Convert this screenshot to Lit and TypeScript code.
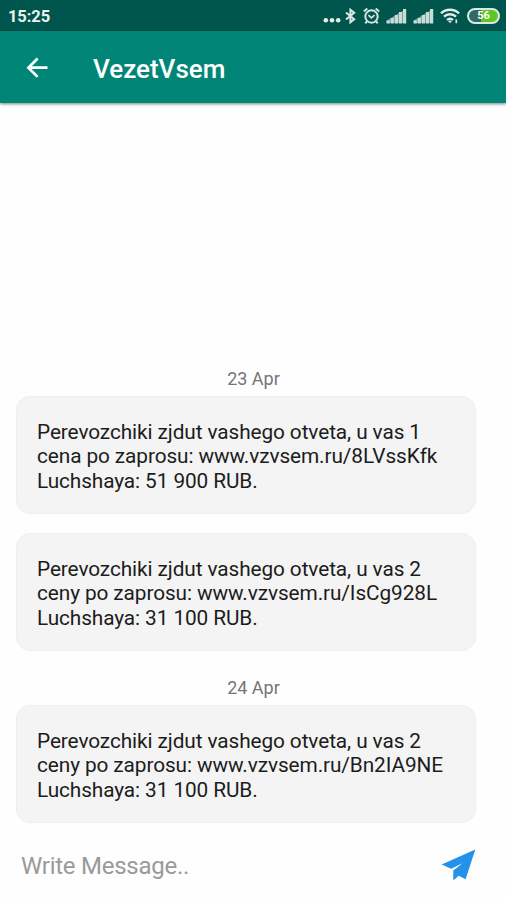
import { LitElement, html, css, svg } from "lit";
import { customElement, property } from "lit/decorators.js";

const FONT = css`Roboto, "Noto Sans", sans-serif`;

@customElement("status-bar")
class StatusBar extends LitElement {
  static styles = css`
    :host {
      display: flex;
      align-items: center;
      justify-content: space-between;
      box-sizing: border-box;
      height: 31px;
      padding: 2px 6px 0 8px;
      background: #00564c;
      font-family: ${FONT};
      color: #e9f3f1;
    }
    .time { font-size: 16.5px; font-weight: 700; letter-spacing: -0.1px; line-height: 20px; padding-top: 1px; }
    .icons { display: flex; align-items: center; padding-bottom: 1px; }
    svg { display: block; }
    .dots { margin-right: 4px; }
    .bt { margin-right: 7px; }
    .alarm { margin-right: 6px; }
    .signal { margin-right: 6px; }
    .wifi { margin-right: 7px; }
    .battery {
      display: flex;
      align-items: center;
      justify-content: center;
      box-sizing: border-box;
      width: 33px;
      height: 16px;
      border: 2px solid #d9eae6;
      border-radius: 8px;
      background: linear-gradient(90deg, #2e6b62 0 42%, #5fc628 42%);
      color: #fff;
      font-size: 11px;
      font-weight: 700;
      line-height: 12px;
    }
  `;

  private signal() {
    const heights = [3, 5.5, 8.5, 11.5, 14.5];
    return html`<svg class="signal" width="21" height="16" viewBox="0 0 21 16">
      <path d="M.6 15V12.500L20 1V15z" fill="#6f9f97"/>
      ${heights.map((h, i) => svg`<rect x=${0.6 + i * 4.1} y=${15.5 - h} width="3.2" height=${h} fill="#c8ddd9"/>`)}
    </svg>`;
  }

  render() {
    return html`
      <div class="time">15:25</div>
      <div class="icons">
        <svg class="dots" width="18" height="16" viewBox="0 0 18 16" fill="#e3efed">
          <circle cx="2.800" cy="12.300" r="2.300"/><circle cx="9" cy="12.300" r="2.300"/><circle cx="15.200" cy="12.300" r="2.300"/>
        </svg>
        <svg class="bt" width="11" height="16" viewBox="0 0 11 16" fill="none" stroke="#d9e8e5" stroke-width="2">
          <path d="M1 4.500 9.200 11.300 5.400 14.300V1.700L9.200 4.700 1 11.500"/>
        </svg>
        <svg class="alarm" width="17" height="18" viewBox="0 0 17 18" fill="none" stroke="#d3e4e1" stroke-width="2">
          <circle cx="8.500" cy="9.500" r="6.200"/>
          <path d="M.8 4.400 4.300 1.400M16.200 4.400 12.700 1.400M3.900 14.300 2.300 16.400M13.100 14.300 14.700 16.400"/>
          <path d="m5.400 8.200 3 2.700 3.200-2.800" stroke-width="1.700"/>
        </svg>
        ${this.signal()}${this.signal()}
        <svg class="wifi" width="20" height="16" viewBox="0 0 20 16" fill="none" stroke="#e3efed" stroke-width="2.400">
          <path d="M1 5.300C6 .5 14 .5 19 5.300M4 8.700c3.400-3.200 8.600-3.200 12 0M7 11.900c1.800-1.500 4.200-1.500 6 0"/>
          <path d="M8 12.800 10 15.300l2-2.500z" fill="#e3efed" stroke="none"/>
          <path d="M16.300 11.400v3.800" stroke-width="1.600"/>
        </svg>
        <div class="battery">56</div>
      </div>
    `;
  }
}

@customElement("app-header")
class AppHeader extends LitElement {
  @property() heading = "";
  static styles = css`
    :host {
      display: flex;
      align-items: center;
      box-sizing: border-box;
      height: 72px;
      padding: 1px 26px 0;
      background: #008577;
      color: #fff;
      box-shadow: 0 1px 3px rgba(0, 0, 0, 0.5);
      font-family: ${FONT};
    }
    svg { display: block; margin-right: 45px; }
    .title { font-size: 26px; font-weight: 500; line-height: 32px; padding-top: 3px; }
  `;
  render() {
    return html`
      <svg width="22" height="22" viewBox="0 0 22 22" fill="none" stroke="#fff" stroke-width="2.700">
        <path d="M21.500 10.700H2.500M11.600 1.500 2.400 10.700l9.200 9.200"/>
      </svg>
      <div class="title">${this.heading}</div>
    `;
  }
}

@customElement("message-bubble")
class MessageBubble extends LitElement {
  @property({ attribute: false }) lines: string[] = [];
  static styles = css`
    :host {
      display: block;
      box-sizing: border-box;
      width: 460px;
      height: 118px;
      padding: 23px 20px 0;
      border: 1px solid #efefef;
      border-radius: 14px;
      background: #f4f4f4;
      color: #1c1c1c;
      font-family: ${FONT};
      font-size: 20.8px;
      letter-spacing: -0.09px;
      line-height: 24.4px;
    }
    .line { white-space: nowrap; }
  `;
  render() {
    return this.lines.map((l) => html`<div class="line">${l}</div>`);
  }
}

const DAYS = [
  {
    date: "23 Apr",
    messages: [
      ["Perevozchiki zjdut vashego otveta, u vas 1", "cena po zaprosu: www.vzvsem.ru/8LVssKfk", "Luchshaya: 51 900 RUB."],
      ["Perevozchiki zjdut vashego otveta, u vas 2", "ceny po zaprosu: www.vzvsem.ru/IsCg928L", "Luchshaya: 31 100 RUB."],
    ],
  },
  {
    date: "24 Apr",
    messages: [
      ["Perevozchiki zjdut vashego otveta, u vas 2", "ceny po zaprosu: www.vzvsem.ru/Bn2IA9NE", "Luchshaya: 31 100 RUB."],
    ],
  },
];

@customElement("app-root")
class AppRoot extends LitElement {
  static styles = css`
    :host {
      display: flex;
      flex-direction: column;
      width: 506px;
      height: 900px;
      overflow: hidden;
      background: #fefefe;
      font-family: ${FONT};
    }
    .thread {
      flex: 1;
      display: flex;
      flex-direction: column;
      justify-content: flex-end;
      gap: 26.5px;
      padding: 0 16px;
    }
    .day { display: flex; flex-direction: column; gap: 19px; }
    .date {
      margin-bottom: -11.5px;
      padding-left: 1px;
      text-align: center;
      color: #757575;
      font-size: 18px;
      line-height: 20px;
    }
    .composer {
      display: flex;
      align-items: center;
      justify-content: space-between;
      box-sizing: border-box;
      height: 77px;
      padding: 7px 30px 0 21px;
    }
    .hint { color: #9a9a9a; font-size: 24px; letter-spacing: -0.26px; line-height: 28px; padding-top: 2px; }
    svg { display: block; }
  `;
  render() {
    return html`
      <status-bar></status-bar>
      <app-header heading="VezetVsem"></app-header>
      <div class="thread">
        ${DAYS.map((d) => html`
          <div class="day">
            <div class="date">${d.date}</div>
            ${d.messages.map((m) => html`<message-bubble .lines=${m}></message-bubble>`)}
          </div>
        `)}
      </div>
      <div class="composer">
        <div class="hint">Write Message..</div>
        <svg width="35" height="33" viewBox="0 0 35 33" fill="#2491eb">
          <path d="M34.300 .5 .6 15.600l9.600 4.200L21.500 14.200 12.300 21.600V31.500l5.400-4.800 6.900 3.500z"/>
        </svg>
      </div>
    `;
  }
}
